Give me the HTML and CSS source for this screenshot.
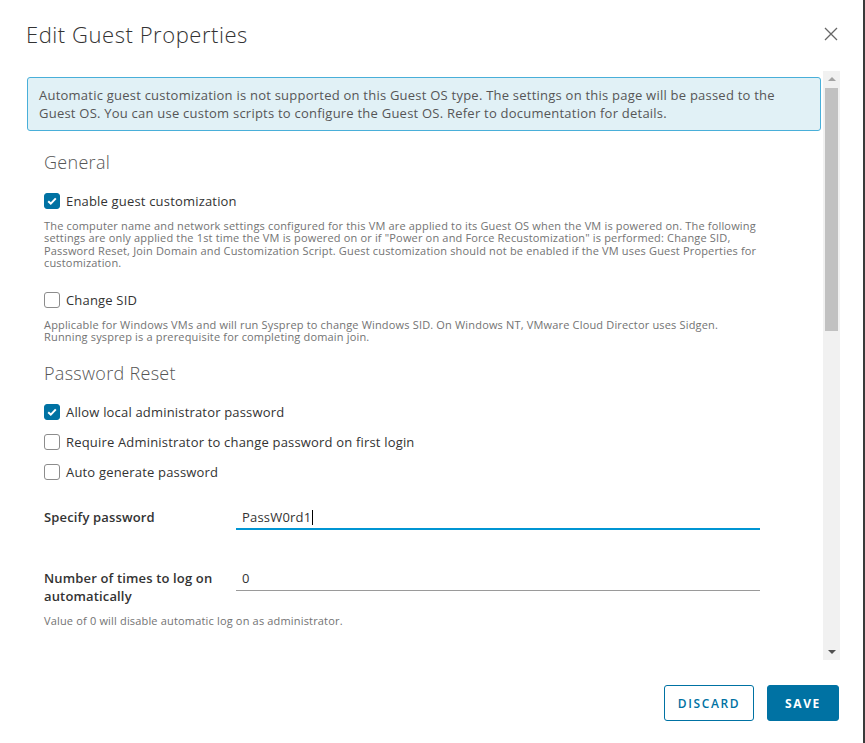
FILE: index.html
```html
<!DOCTYPE html>
<html>
<head>
<meta charset="utf-8">
<link rel="stylesheet" href="styles.css">
</head>
<body>
<div class="dialog">
  <div class="header">
    <h1 class="title">Edit Guest Properties</h1>
    <svg class="close" width="14" height="14" viewBox="0 0 14 14"><path d="M1 1L13 13M13 1L1 13" stroke="#666" stroke-width="1.3" fill="none"/></svg>
  </div>
  <div class="body">
    <div class="content">
      <div class="alert">Automatic guest customization is not supported on this Guest OS type. The settings on this page will be passed to the<br>Guest OS. You can use custom scripts to configure the Guest OS. Refer to documentation for details.</div>
      <div class="section">
        <h2 class="heading h-general">General</h2>
        <div class="check first"><span class="box on"><svg width="10" height="8" viewBox="0 0 10 8"><path d="M1.2 4.2L3.8 6.6L8.8 1.4" stroke="#fff" stroke-width="2" fill="none"/></svg></span><span class="lbl">Enable guest customization</span></div>
        <p class="help">The computer name and network settings configured for this VM are applied to its Guest OS when the VM is powered on. The following<br>settings are only applied the 1st time the VM is powered on or if "Power on and Force Recustomization" is performed: Change SID,<br>Password Reset, Join Domain and Customization Script. Guest customization should not be enabled if the VM uses Guest Properties for<br>customization.</p>
        <div class="check spaced"><span class="box"></span><span class="lbl">Change SID</span></div>
        <p class="help">Applicable for Windows VMs and will run Sysprep to change Windows SID. On Windows NT, VMware Cloud Director uses Sidgen.<br>Running sysprep is a prerequisite for completing domain join.</p>
        <h2 class="heading h-pass">Password Reset</h2>
        <div class="check first"><span class="box on"><svg width="10" height="8" viewBox="0 0 10 8"><path d="M1.2 4.2L3.8 6.6L8.8 1.4" stroke="#fff" stroke-width="2" fill="none"/></svg></span><span class="lbl">Allow local administrator password</span></div>
        <div class="check next"><span class="box"></span><span class="lbl">Require Administrator to change password on first login</span></div>
        <div class="check next"><span class="box"></span><span class="lbl">Auto generate password</span></div>
        <div class="row row-pass">
          <div class="flabel">Specify password</div>
          <div class="input focus">PassW0rd1<span class="caret"></span></div>
        </div>
        <div class="row row-num">
          <div class="flabel">Number of times to log on<br>automatically</div>
          <div class="input">0</div>
        </div>
        <p class="help help-last">Value of 0 will disable automatic log on as administrator.</p>
      </div>
    </div>
    <div class="scrollbar">
      <div class="arrow up"></div>
      <div class="thumb"></div>
      <div class="arrow down"></div>
    </div>
  </div>
  <div class="footer">
    <button class="btn outline">DISCARD</button>
    <button class="btn primary">SAVE</button>
  </div>
</div>
</body>
</html>
```
FILE: styles.css
```css
html, body {
  margin: 0;
  padding: 0;
  background: #fff;
}
body {
  font-family: "Open Sans", "Liberation Sans", sans-serif;
  color: #333;
  width: 865px;
  height: 743px;
  overflow: hidden;
}
.dialog {
  width: 863px;
  height: 743px;
  border-right: 2px solid #3a3a3a;
  display: flex;
  flex-direction: column;
}
.header {
  height: 70px;
  display: flex;
  align-items: flex-start;
  justify-content: space-between;
  padding: 0 26px 0 26px;
  box-sizing: border-box;
}
.title {
  margin: 19px 0 0 0;
  font-size: 22px;
  font-weight: 300;
  line-height: 30px;
  letter-spacing: 0.55px;
  color: #333;
}
.close {
  margin-top: 27px;
  margin-right: -1px;
}
.body {
  height: 590px;
  display: flex;
  padding-left: 27px;
}
.content {
  width: 794px;
  overflow: hidden;
}
.alert {
  margin-top: 7px;
  background: #e1f1f6;
  border: 1px solid #49afd9;
  border-radius: 3px;
  padding: 8px 11px;
  font-size: 13px;
  line-height: 18px;
  letter-spacing: 0.23px;
  color: #565656;
  white-space: nowrap;
}
.section {
  padding-left: 17px;
}
.heading {
  margin: 0;
  font-size: 18px;
  font-weight: 300;
  line-height: 24px;
  letter-spacing: 0.3px;
  color: #565656;
}
.h-general { margin-top: 19px; }
.h-pass { margin-top: 18px; }
.check {
  display: flex;
  align-items: center;
  height: 24px;
}
.check.first { margin-top: 15px; }
.check.spaced { margin-top: 18px; }
.check.next { margin-top: 6px; }
.box {
  width: 16px;
  height: 16px;
  border: 1px solid #8c8c8c;
  border-radius: 3px;
  box-sizing: border-box;
  margin-right: 6px;
  display: flex;
  align-items: center;
  justify-content: center;
  flex: none;
}
.box.on {
  background: #0072a3;
  border-color: #0072a3;
}
.lbl {
  font-size: 13px;
  letter-spacing: 0.18px;
  color: #333;
}
.help {
  margin: 7px 0 0 0;
  font-size: 11px;
  line-height: 12.4px;
  letter-spacing: 0.17px;
  color: #737373;
  white-space: nowrap;
}
.row {
  display: grid;
  grid-template-columns: 192px 524px;
  align-items: start;
}
.row-pass { margin-top: 24px; }
.row-num { margin-top: 39px; }
.flabel {
  font-size: 13px;
  font-weight: 600;
  line-height: 18px;
  letter-spacing: 0.15px;
  color: #333;
}
.input {
  font-size: 13px;
  line-height: 18px;
  letter-spacing: 0.2px;
  color: #333;
  padding: 0 6px 3px 6px;
  border-bottom: 1px solid #9a9a9a;
  display: flex;
  align-items: center;
}
.input.focus {
  border-bottom: 2px solid #0095d3;
  padding-bottom: 2px;
}
.caret {
  display: inline-block;
  width: 1px;
  height: 15px;
  background: #000;
  margin-left: 1px;
}
.help-last { margin-top: 10px; }
.scrollbar {
  width: 17px;
  margin-left: 2px;
  margin-top: 1px;
  background: #f1f1f1;
  display: flex;
  flex-direction: column;
  align-items: center;
}
.arrow {
  width: 0;
  height: 0;
  border-left: 4px solid transparent;
  border-right: 4px solid transparent;
}
.arrow.up {
  border-bottom: 4px solid #a3a3a3;
  margin: 6px 0 7px 0;
}
.thumb {
  width: 13px;
  height: 243px;
  background: #c1c1c1;
}
.arrow.down {
  border-top: 4px solid #505050;
  margin-top: auto;
  margin-bottom: 6px;
}
.footer {
  flex: 1;
  display: flex;
  justify-content: flex-end;
  align-items: flex-start;
  gap: 13px;
  padding: 25px 24px 0 0;
}
.btn {
  height: 36px;
  border-radius: 3px;
  font-family: "Open Sans", "Liberation Sans", sans-serif;
  font-size: 12px;
  font-weight: 600;
  letter-spacing: 1.6px;
  padding: 0;
  box-sizing: border-box;
}
.btn.outline {
  width: 90px;
  background: #fff;
  border: 1px solid #0072a3;
  color: #0072a3;
}
.btn.primary {
  width: 72px;
  background: #0072a3;
  border: 1px solid #0072a3;
  color: #fff;
  font-weight: 700;
}
```
